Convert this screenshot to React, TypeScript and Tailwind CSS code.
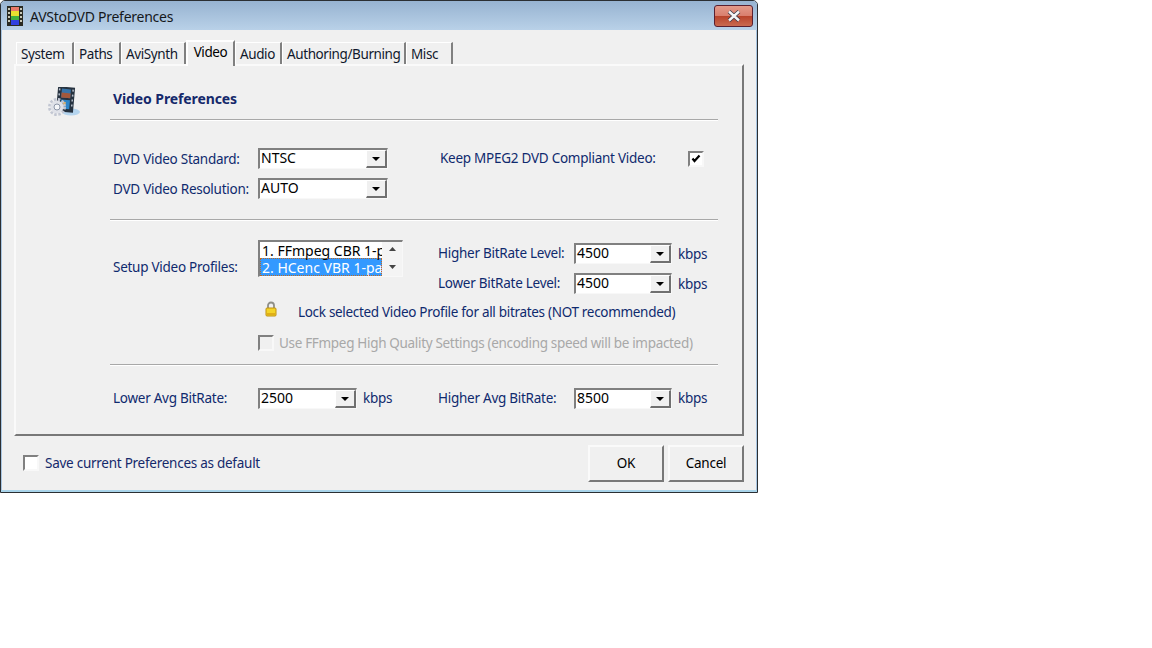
const font = "font-['Noto_Sans','Open_Sans',sans-serif] text-[13.5px] tracking-[-0.26px] whitespace-nowrap";

function Combo({ value, width }: { value: string; width: string }) {
  return (
    <div className={`${width} h-[21px] flex bg-white border-t-2 border-l-2 border-r border-b border-t-[#808080] border-l-[#808080] border-r-[#f8f8f8] border-b-[#f8f8f8] shrink-0`}>
      <span className="flex-1 pl-[1px] text-[14px] tracking-normal leading-[16px] text-black">{value}</span>
      <span className="w-[21px] h-[18px] flex items-center justify-center bg-[#f0f0f0] border-t border-l border-r-2 border-b-2 border-t-white border-l-white border-r-[#707070] border-b-[#707070]">
        <svg width="8" height="4" viewBox="0 0 8 4"><path d="M0 0h8L4 4z" fill="#000" /></svg>
      </span>
    </div>
  );
}

function Tab({ label, active, width }: { label: string; active?: boolean; width: string }) {
  if (active) {
    return (
      <div className={`${width} h-[26px] -mb-[2px] relative z-10 bg-[#f0f0f0] border-t-2 border-l-2 border-t-white border-l-white border-r-2 border-r-[#808080] text-center tracking-[-0.4px] leading-[21px] text-black`}>
        {label}
      </div>
    );
  }
  return (
    <div className={`${width} h-[22px] border-t border-t-white border-l border-l-white border-r-2 border-r-[#808080] pl-[4px] tracking-[-0.4px] leading-[22px] text-[#10182c]`}>
      {label}
    </div>
  );
}

function Divider() {
  return <div className="h-[2px] w-[608px] border-t border-t-[#a8a8a8] border-b border-b-white" />;
}

function CheckBox({ disabled, checked }: { disabled?: boolean; checked?: boolean }) {
  return (
    <span className={`w-[16px] h-[16px] shrink-0 flex items-center justify-center border-2 border-t-[#808080] border-l-[#808080] border-r-[#f8f8f8] border-b-[#f8f8f8] ${disabled ? "bg-[#f0f0f0]" : "bg-white"}`}>
      {checked && (
        <svg width="10" height="9" viewBox="0 0 10 9"><path d="M1.5 4.5l2 2.5L8.5 1.5" stroke="#000" strokeWidth="2.2" fill="none" /></svg>
      )}
    </span>
  );
}

function VideoIcon() {
  return (
    <svg width="34" height="30" viewBox="0 0 34 30">
      <ellipse cx="24" cy="25" rx="9" ry="3.5" fill="#b4d4ee" />
      <g transform="rotate(5 19 13)">
        <rect x="10" y="0" width="17" height="25" fill="#26323f" />
        <path d="M11 2h1.5v2H11zM11 7h1.5v2H11zM11 12h1.5v2H11zM11 17h1.5v2H11zM24.5 2H26v2h-1.5zM24.5 7H26v2h-1.5zM24.5 12H26v2h-1.5zM24.5 17H26v2h-1.5z" fill="#b8c0cc" />
        <rect x="14" y="2" width="9" height="9" fill="#3a74a8" />
        <rect x="14" y="6" width="9" height="5" fill="#a5583a" />
        <rect x="14" y="13" width="9" height="9" fill="#2f86c8" />
        <path d="M16 15h3v3h-3z" fill="#d8b070" />
      </g>
      <circle cx="10" cy="20" r="7.5" fill="none" stroke="#c2c6d2" strokeWidth="3" strokeDasharray="2.4 1.6" />
      <circle cx="10" cy="20" r="6.5" fill="#dfe1e8" />
      <circle cx="10" cy="20" r="3" fill="#f5f6f9" stroke="#8d96a8" />
    </svg>
  );
}

export default function App() {
  return (
    <div className={`${font} w-[1152px] h-[648px] bg-white`}>
      <div className="w-[758px] h-[493px] flex flex-col bg-[#f0f0f0] border border-[#2b2f33] rounded-t-[5px] overflow-hidden">
        {/* title bar */}
        <div className="h-[29px] flex items-start bg-gradient-to-b from-[#97b3d1] to-[#b9d1e8] pl-[6px] pr-[4px] shrink-0">
          <svg width="16" height="20" viewBox="0 0 16 20" className="mt-[5px]">
            <rect width="16" height="20" fill="#2a2a22" />
            <path d="M1 2h2v2H1zM1 6h2v2H1zM1 10h2v2H1zM1 14h2v2H1zM13 2h2v2h-2zM13 6h2v2h-2zM13 10h2v2h-2zM13 14h2v2h-2z" fill="#c8c8b8" />
            <rect x="4" y="1" width="8" height="4" fill="#e87868" />
            <rect x="4" y="5" width="8" height="5" fill="#e8e030" />
            <rect x="4" y="10" width="8" height="4" fill="#40b040" />
            <rect x="4" y="14" width="8" height="5" fill="#3040e0" />
          </svg>
          <span className="ml-[7px] mt-[6px] text-[14px] leading-[20px] text-[#15181c]">AVStoDVD Preferences</span>
          <div className="ml-auto mt-[4px] w-[39px] h-[22px] flex items-center justify-center rounded-[3px] border border-[#5a2030] bg-[linear-gradient(#e39a8a_0%,#d97f6e_48%,#b8422a_50%,#c96a50_100%)]">
            <svg width="14" height="12" viewBox="0 0 14 12">
              <path d="M2 1.5l10 9M12 1.5l-10 9" stroke="#3a3a4a" strokeWidth="4" />
              <path d="M2 1.5l10 9M12 1.5l-10 9" stroke="#f4f4f6" strokeWidth="2.4" />
            </svg>
          </div>
        </div>

        <div className="flex-1 flex flex-col px-[12px] border-x border-x-[#a9c6e2]">
          {/* tabs */}
          <div className="h-[34px] flex items-end pl-[2px]">
            <Tab label="System" width="w-[58px]" />
            <Tab label="Paths" width="w-[47px]" />
            <Tab label="AviSynth" width="w-[65px]" />
            <Tab label="Video" active width="w-[49px]" />
            <Tab label="Audio" width="w-[47px]" />
            <Tab label="Authoring/Burning" width="w-[124px]" />
            <Tab label="Misc" width="w-[47px]" />
          </div>

          {/* panel */}
          <div className="w-[730px] h-[372px] flex border-t-2 border-l-2 border-t-[#fafafa] border-l-[#fafafa] border-r-2 border-b-2 border-r-[#787878] border-b-[#787878]">
            <div className="w-[94px] shrink-0 pl-[31px] pt-[21px]">
              <VideoIcon />
            </div>
            <div className="flex-1 flex flex-col text-[#0f2a6e]">
              <div className="h-[53px] pl-[3px] pt-[23px] text-[14px] tracking-[-0.1px] leading-[20px] font-bold text-[#15296b]">Video Preferences</div>
              <Divider />

              <div className="h-[98px] flex pt-[27px] pl-[3px]">
                <div className="w-[327px] flex flex-col gap-[9px] shrink-0">
                  <div className="h-[21px] flex items-center">
                    <span className="w-[145px] pt-[2px]">DVD Video Standard:</span>
                    <Combo value="NTSC" width="w-[130px]" />
                  </div>
                  <div className="h-[21px] flex items-center">
                    <span className="w-[145px] pt-[2px]">DVD Video Resolution:</span>
                    <Combo value="AUTO" width="w-[130px]" />
                  </div>
                </div>
                <div className="h-[21px] flex items-center">
                  <span className="w-[248px]">Keep MPEG2 DVD Compliant Video:</span>
                  <CheckBox checked />
                </div>
              </div>
              <Divider />

              <div className="h-[143px] pl-[3px] pt-[19px]">
                <div className="flex h-[53px]">
                  <span className="w-[145px] self-center pt-[2px]">Setup Video Profiles:</span>
                  <div className="w-[145px] h-[37px] shrink-0 flex bg-white border-t-2 border-l-2 border-r border-b border-t-[#808080] border-l-[#808080] border-r-[#f8f8f8] border-b-[#f8f8f8] text-[14px] tracking-normal">
                    <div className="w-[122px] overflow-hidden">
                      <div className="h-[16px] pl-[2px] leading-[18px] text-black">1. FFmpeg CBR 1-pass</div>
                      <div className="h-[18px] pl-[2px] leading-[20px] text-white bg-[#3399ff] outline-1 -outline-offset-1 outline-dotted outline-[#c06a20]">2. HCenc VBR 1-pass</div>
                    </div>
                    <div className="flex-1 flex flex-col items-center justify-between pt-[5px] pb-[7px] bg-[#f4f4f4]">
                      <svg width="7" height="4" viewBox="0 0 7 4"><path d="M3.5 0L7 4H0z" fill="#444" /></svg>
                      <svg width="7" height="4" viewBox="0 0 7 4"><path d="M0 0h7L3.5 4z" fill="#444" /></svg>
                    </div>
                  </div>
                  <div className="ml-[35px] flex flex-col gap-[9px] pt-[3px]">
                    <div className="h-[21px] flex items-center">
                      <span className="w-[136px]">Higher BitRate Level:</span>
                      <Combo value="4500" width="w-[98px]" />
                      <span className="ml-[6px] pt-[2px]">kbps</span>
                    </div>
                    <div className="h-[21px] flex items-center">
                      <span className="w-[136px]">Lower BitRate Level:</span>
                      <Combo value="4500" width="w-[98px]" />
                      <span className="ml-[6px] pt-[2px]">kbps</span>
                    </div>
                  </div>
                </div>
                <div className="h-[38px] flex items-center pl-[152px] tracking-[-0.31px]">
                  <svg width="12" height="16" viewBox="0 0 12 16" className="mb-[6px]">
                    <path d="M3 7V4.5a3 3 0 016 0V7" stroke="#8f8f88" strokeWidth="1.8" fill="none" />
                    <rect x="1" y="7" width="10" height="8" rx="1" fill="#f4d428" stroke="#c09010" />
                    <rect x="2" y="12" width="8" height="2" fill="#dfae18" />
                  </svg>
                  <span className="ml-[21px]">Lock selected Video Profile for all bitrates (NOT recommended)</span>
                </div>
                <div className="h-[20px] mt-[2px] flex items-center pl-[145px] text-[#a8a8a8] tracking-[-0.32px]">
                  <CheckBox disabled />
                  <span className="ml-[5px]">Use FFmpeg High Quality Settings (encoding speed will be impacted)</span>
                </div>
              </div>
              <Divider />

              <div className="flex-1 flex pl-[3px] pt-[22px]">
                <div className="flex items-start">
                  <span className="w-[145px] leading-[21px]">Lower Avg BitRate:</span>
                  <Combo value="2500" width="w-[99px]" />
                  <span className="ml-[6px] w-[75px] leading-[21px]">kbps</span>
                </div>
                <div className="flex items-start">
                  <span className="w-[136px] leading-[21px]">Higher Avg BitRate:</span>
                  <Combo value="8500" width="w-[98px]" />
                  <span className="ml-[6px] leading-[21px]">kbps</span>
                </div>
              </div>
            </div>
          </div>

          {/* footer */}
          <div className="flex-1 flex items-start pt-[9px]">
            <div className="flex items-center h-[36px] pl-[9px]">
              <CheckBox />
              <span className="ml-[6px] text-[#15296b]">Save current Preferences as default</span>
            </div>
            <div className="ml-auto flex gap-[4px]">
              <button className="w-[76px] h-[37px] bg-[#f0f0f0] border-2 border-t-[#fafafa] border-l-[#fafafa] border-r-[#787878] border-b-[#787878] text-black">OK</button>
              <button className="w-[76px] h-[37px] bg-[#f0f0f0] border-2 border-t-[#fafafa] border-l-[#fafafa] border-r-[#787878] border-b-[#787878] text-black">Cancel</button>
            </div>
          </div>
        </div>
        <div className="h-[2px] bg-[#a9d4ea] shrink-0" />
      </div>
    </div>
  );
}
